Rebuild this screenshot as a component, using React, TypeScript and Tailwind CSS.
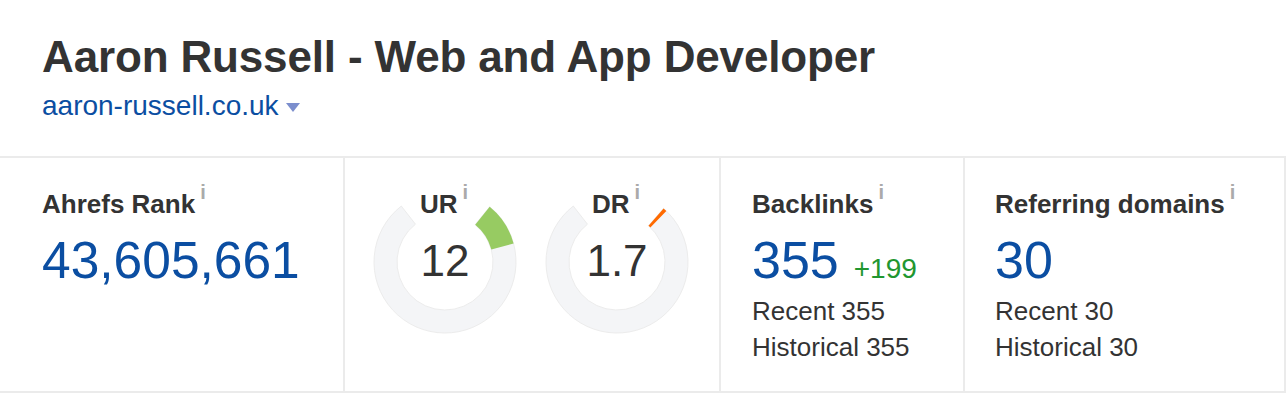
const FONT = { fontFamily: '"Liberation Sans", Arial, sans-serif' };

// angles are clockwise from 12 o'clock, in degrees
const pt = (cx: number, cy: number, r: number, a: number) => {
  const rad = (a * Math.PI) / 180;
  return [cx + r * Math.sin(rad), cy - r * Math.cos(rad)];
};

const sector = (a0: number, a1: number, rO = 71, rI = 48, c = 72) => {
  const [x0, y0] = pt(c, c, rO, a0);
  const [x1, y1] = pt(c, c, rO, a1);
  const [x2, y2] = pt(c, c, rI, a1);
  const [x3, y3] = pt(c, c, rI, a0);
  const large = a1 - a0 > 180 ? 1 : 0;
  return `M${x0} ${y0} A${rO} ${rO} 0 ${large} 1 ${x1} ${y1} L${x2} ${y2} A${rI} ${rI} 0 ${large} 0 ${x3} ${y3} Z`;
};

const Info = () => (
  <span className="ml-[5px] inline-block align-top text-[20px] leading-none text-[#aaaaaa] -translate-y-[6px]">i</span>
);

const Gauge = ({
  label,
  value,
  from,
  to,
  color,
}: {
  label: string;
  value: string;
  from: number;
  to: number;
  color: string;
}) => (
  <div className="grid h-[144px] w-[144px]">
    <svg width="144" height="144" viewBox="0 0 144 144" className="col-start-1 row-start-1">
      <path d={sector(from, 322)} fill="#f4f5f7" stroke="#ececec" strokeWidth="1" />
      <path d={sector(from, to)} fill={color} />
    </svg>
    <div className="col-start-1 row-start-1 flex justify-center pr-[2px] -mt-[2px]">
      <span className="text-[26px] font-bold leading-[32px] text-[#333333]">
        {label}
        <Info />
      </span>
    </div>
    <div className="col-start-1 row-start-1 flex items-center justify-center pb-[2px] text-[44px] leading-[52px] text-[#333333]">
      {value}
    </div>
  </div>
);

export default function App() {
  return (
    <div className="w-[1288px] bg-white" style={FONT}>
      <header className="pl-[42px] pt-[31px] pb-[32px]">
        <h1 className="text-[44px] font-bold leading-[52px] tracking-[-0.15px] text-[#333333]">
          Aaron Russell - Web and App Developer
        </h1>
        <div className="mt-[5px] flex items-center text-[28px] leading-[36px] text-[#0b4ea2]">
          <span>aaron-russell.co.uk</span>
          <svg width="14" height="10" viewBox="0 0 14 10" className="ml-[7px] mt-[3px]">
            <path d="M0 0 L14 0 L7 9 Z" fill="#7b8ecd" />
          </svg>
        </div>
      </header>

      <section className="flex h-[237px] w-[1286px] border-y-2 border-r-2 border-[#ebebeb]">
        <div className="w-[345px] border-r-2 border-[#ebebeb] pl-[42px] pt-[30px]">
          <div className="text-[26px] font-bold leading-[32px] text-[#333333]">
            Ahrefs Rank
            <Info />
          </div>
          <div className="mt-[10px] text-[51.5px] leading-[60px] text-[#0b4ea2]">43,605,661</div>
        </div>

        <div className="flex w-[376px] gap-[28px] border-r-2 border-[#ebebeb] pl-[28px] pt-[32px]">
          <Gauge label="UR" value="12" from={39} to={75} color="#97cb62" />
          <Gauge label="DR" value="1.7" from={41} to={44} color="#ff6a00" />
        </div>

        <div className="w-[244px] border-r-2 border-[#ebebeb] pl-[31px] pt-[30px]">
          <div className="text-[26px] font-bold leading-[32px] text-[#333333]">
            Backlinks
            <Info />
          </div>
          <div className="mt-[10px] flex items-baseline">
            <span className="text-[52px] leading-[60px] text-[#0b4ea2]">355</span>
            <span className="ml-[15px] text-[28px] text-[#21962f]">+199</span>
          </div>
          <div className="mt-[3px] text-[26px] leading-[36px] text-[#333333]">Recent 355</div>
          <div className="text-[26px] leading-[36px] text-[#333333]">Historical 355</div>
        </div>

        <div className="flex-1 pl-[30px] pt-[30px]">
          <div className="text-[26px] font-bold leading-[32px] text-[#333333]">
            Referring domains
            <Info />
          </div>
          <div className="mt-[10px] text-[52px] leading-[60px] text-[#0b4ea2]">30</div>
          <div className="mt-[3px] text-[26px] leading-[36px] text-[#333333]">Recent 30</div>
          <div className="text-[26px] leading-[36px] text-[#333333]">Historical 30</div>
        </div>
      </section>
    </div>
  );
}
